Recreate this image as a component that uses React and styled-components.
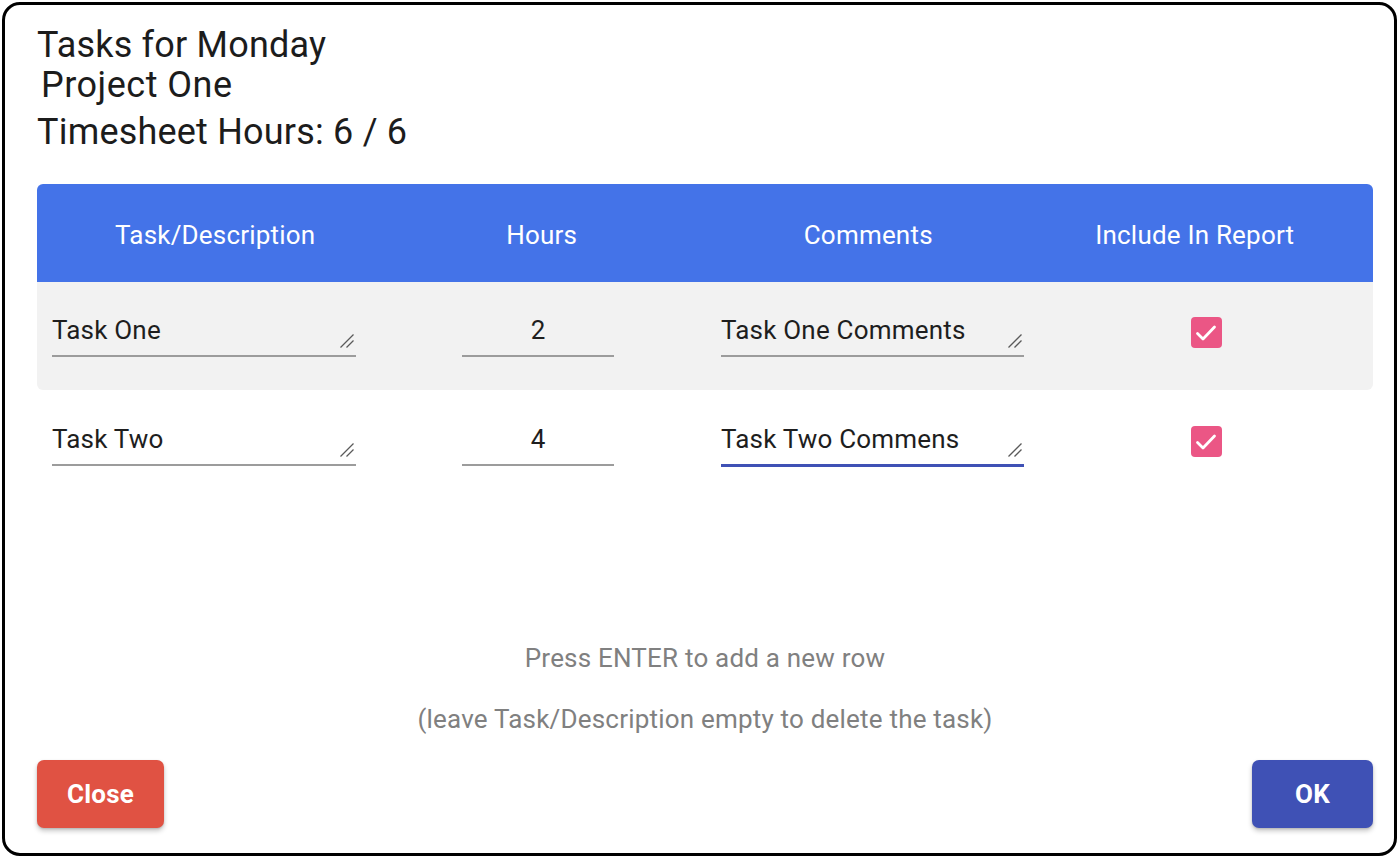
import React from "react";
import styled, { createGlobalStyle, css } from "styled-components";

const Global = createGlobalStyle`
  html, body { margin: 0; padding: 0; background: #ffffff; }
  body { font-family: Roboto, "Noto Sans", "Liberation Sans", sans-serif; letter-spacing: 0.2px; }
  * { box-sizing: border-box; }
`;

const Frame = styled.div`
  width: 1395px;
  height: 854px;
  margin: 2px 0 0 2px;
  border: 3px solid #000;
  border-radius: 18px;
  padding: 19px 21px 25px 32px;
  display: flex;
  flex-direction: column;
  background: #fff;
`;

const Heading = styled.div`
  display: flex;
  flex-direction: column;
  color: #1c1c1c;
  font-size: 36px;
  line-height: 42px;
`;

const Title = styled.div``;
const Subtitle = styled.div`
  margin-top: -2px;
  padding-left: 4px;
  letter-spacing: 0.5px;
`;
const HoursLine = styled.div`
  margin-top: 5px;
`;

const Table = styled.div`
  margin-top: 31px;
  display: flex;
  flex-direction: column;
`;

const Grid = styled.div`
  display: grid;
  grid-template-columns: repeat(4, 1fr);
  padding: 0 15px;
`;

const HeaderRow = styled(Grid)`
  height: 98px;
  background: #4473e8;
  border-radius: 6px 6px 0 0;
  align-items: center;
`;

const HeadCell = styled.div`
  color: #fff;
  font-size: 26px;
  text-align: center;
  padding-top: 3px;
`;

const Row = styled(Grid)`
  height: 108px;
  align-items: start;
  background: ${(p) => (p.$shaded ? "#f2f2f2" : "#ffffff")};
  border-radius: 0 0 6px 6px;
  padding-top: ${(p) => (p.$shaded ? "31px" : "32px")};
`;

const Field = styled.div`
  position: relative;
  width: ${(p) => p.$width}px;
  font-size: 26px;
  line-height: 30px;
  color: #1e1e1e;
  padding-top: 2px;
  padding-bottom: 10px;
  border-bottom: 2px solid #9c9c9c;
  text-align: ${(p) => (p.$center ? "center" : "left")};
  ${(p) =>
    p.$focused &&
    css`
      border-bottom-color: #3f51b5;
      box-shadow: 0 1px 0 #3f51b5;
    `}
`;

const TaskField = styled(Field)`
  justify-self: start;
`;

const HoursField = styled(Field)`
  justify-self: center;
  margin-right: 7px;
`;

const CommentField = styled(Field)`
  justify-self: start;
  margin-left: 16px;
`;

const Grip = styled.svg`
  position: absolute;
  right: 2px;
  bottom: 7px;
  width: 14px;
  height: 14px;
`;

const CheckBox = styled.div`
  justify-self: start;
  margin-left: 159px;
  margin-top: 4px;
  width: 31px;
  height: 31px;
  border-radius: 4px;
  background: #eb5685;
  display: flex;
  align-items: center;
  justify-content: center;
`;

const Footer = styled.div`
  margin-top: auto;
  display: flex;
  flex-direction: column;
`;

const Hint = styled.div`
  font-size: 26px;
  line-height: 30px;
  color: #808080;
  text-align: center;
  & + & {
    margin-top: 31px;
  }
`;

const Actions = styled.div`
  margin-top: 26px;
  display: flex;
  justify-content: space-between;
`;

const Button = styled.button`
  height: 68px;
  min-width: 121px;
  padding: 0 30px;
  border: none;
  border-radius: 7px;
  color: #fff;
  font-family: Roboto, "Noto Sans", sans-serif;
  font-size: 26px;
  font-weight: 700;
  letter-spacing: 0.2px;
  box-shadow: 0 3px 5px rgba(0, 0, 0, 0.22), 0 1px 2px rgba(0, 0, 0, 0.12);
  background: ${(p) => (p.$variant === "ok" ? "#3f51b5" : "#e05243")};
  cursor: pointer;
`;

const ResizeGrip = () => (
  <Grip viewBox="0 0 14 14">
    <path d="M13.5 0.5 L0.5 13.5 M13.5 6.5 L6.5 13.5" stroke="#5a5a5a" strokeWidth="1.3" fill="none" />
  </Grip>
);

const Check = () => (
  <svg width="26" height="26" viewBox="0 0 26 26">
    <path d="M4.5 13.5 L10 19 L21.5 7" stroke="#fff" strokeWidth="2.8" fill="none" strokeLinecap="round" strokeLinejoin="round" />
  </svg>
);

const tasks = [
  { name: "Task One", hours: "2", comment: "Task One Comments", shaded: true, focused: false },
  { name: "Task Two", hours: "4", comment: "Task Two Commens", shaded: false, focused: true },
];

export default function App() {
  return (
    <>
      <Global />
      <Frame>
        <Heading>
          <Title>Tasks for Monday</Title>
          <Subtitle>Project One</Subtitle>
          <HoursLine>Timesheet Hours: 6 / 6</HoursLine>
        </Heading>
        <Table>
          <HeaderRow>
            <HeadCell>Task/Description</HeadCell>
            <HeadCell>Hours</HeadCell>
            <HeadCell>Comments</HeadCell>
            <HeadCell>Include In Report</HeadCell>
          </HeaderRow>
          {tasks.map((t) => (
            <Row key={t.name} $shaded={t.shaded}>
              <TaskField $width={304}>
                {t.name}
                <ResizeGrip />
              </TaskField>
              <HoursField $width={152} $center>
                {t.hours}
              </HoursField>
              <CommentField $width={303} $focused={t.focused}>
                {t.comment}
                <ResizeGrip />
              </CommentField>
              <CheckBox>
                <Check />
              </CheckBox>
            </Row>
          ))}
        </Table>
        <Footer>
          <Hint>Press ENTER to add a new row</Hint>
          <Hint>(leave Task/Description empty to delete the task)</Hint>
          <Actions>
            <Button $variant="close">Close</Button>
            <Button $variant="ok">OK</Button>
          </Actions>
        </Footer>
      </Frame>
    </>
  );
}
